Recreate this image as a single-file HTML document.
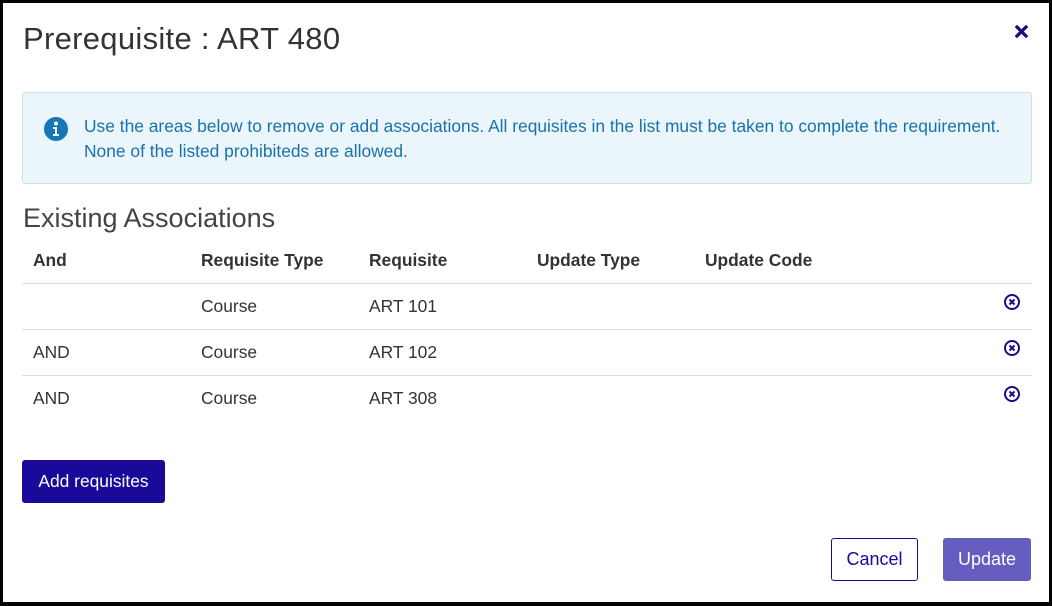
<!DOCTYPE html>
<html><head><style>
*{box-sizing:border-box;margin:0;padding:0}
html,body{width:1052px;height:606px;overflow:hidden;background:#000}
.m{position:absolute;left:3px;top:3px;width:1046px;height:599px;background:#fff;font-family:"Liberation Sans",sans-serif;color:#333}
.t{position:absolute;left:20px;top:18px;font-size:31px;color:#333;font-weight:normal;letter-spacing:0.3px}
.x{position:absolute;left:1011px;top:21px}
.al{position:absolute;left:19px;top:89px;width:1010px;height:92px;background:#eaf6fc;border:1px solid #d4dde2;border-radius:3px}
.al p{position:absolute;left:61px;top:21px;font-size:17.4px;line-height:25px;color:#1b72aa;white-space:nowrap}
.ic{position:absolute;left:21px;top:24px}
h2{position:absolute;left:20px;top:200px;font-size:27px;font-weight:normal;color:#444}
table{position:absolute;left:19px;top:236px;width:1010px;border-collapse:collapse;font-size:17.4px}
th{text-align:left;font-weight:bold;height:44px;padding-left:11px;color:#333;vertical-align:middle}
td{height:46px;border-top:1px solid #ddd;padding-left:11px;color:#333}
.b1{position:absolute;left:19px;top:457px;width:143px;height:43px;background:#1a0a9a;color:#fff;border-radius:3px;font-size:17.4px;text-align:center;line-height:43px}
.c{position:absolute;left:828px;top:535px;width:87px;height:43px;border:1px solid #1a0a9a;color:#1a0a9a;border-radius:3px;font-size:18px;text-align:center;line-height:41px}
.u{position:absolute;left:940px;top:535px;width:88px;height:43px;background:#655dc0;color:#fff;border-radius:3px;font-size:18px;text-align:center;line-height:43px}
</style></head><body><div class="m">
<div class="t">Prerequisite : ART 480</div>
<svg class="x" width="15" height="15" viewBox="0 0 16 16"><path d="M2 2L14 14M14 2L2 14" stroke="#1a0a8a" stroke-width="3.5"/></svg>
<div class="al"><svg class="ic" width="24" height="24" viewBox="0 0 24 24"><circle cx="12" cy="12" r="12" fill="#1776b6"/><circle cx="12" cy="6.5" r="2" fill="#fff"/><path d="M9 10h4v7h2v2H9v-2h2v-5H9z" fill="#fff"/></svg>
<p>Use the areas below to remove or add associations. All requisites in the list must be taken to complete the requirement.<br>None of the listed prohibiteds are allowed.</p></div>
<h2>Existing Associations</h2>
<table>
<tr><th style="width:168px">And</th><th style="width:168px">Requisite Type</th><th style="width:168px">Requisite</th><th style="width:168px">Update Type</th><th>Update Code</th><th></th></tr>
<tr><td></td><td>Course</td><td>ART 101</td><td></td><td></td><td></td></tr>
<tr><td>AND</td><td>Course</td><td>ART 102</td><td></td><td></td><td></td></tr>
<tr><td>AND</td><td>Course</td><td>ART 308</td><td></td><td></td><td></td></tr>
</table>
<svg style="position:absolute;left:1000px;top:290px" width="18" height="110" viewBox="0 0 18 110">
<g fill="none" stroke="#1a0a8a" stroke-width="2"><circle cx="9" cy="9" r="7"/><path d="M6.5 6.5l5 5M11.5 6.5l-5 5"/>
<circle cx="9" cy="55" r="7"/><path d="M6.5 52.5l5 5M11.5 52.5l-5 5"/>
<circle cx="9" cy="101" r="7"/><path d="M6.5 98.5l5 5M11.5 98.5l-5 5"/></g></svg>
<div class="b1">Add requisites</div>
<div class="c">Cancel</div>
<div class="u">Update</div>
</div></body></html>
